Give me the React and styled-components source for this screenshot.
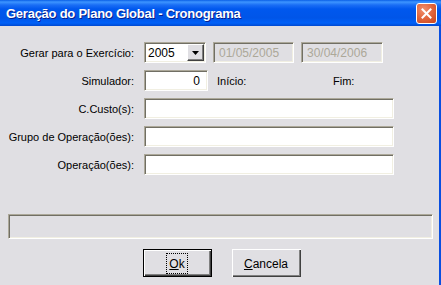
import styled, { createGlobalStyle } from 'styled-components';

const GlobalStyle = createGlobalStyle`
  html, body {
    margin: 0;
    padding: 0;
    background: #e0dfe3;
  }
  body {
    font-family: "Liberation Sans", Arial, sans-serif;
    font-size: 11px;
    color: #000;
  }
`;

const Window = styled.div`
  width: 441px;
  height: 285px;
  display: flex;
  flex-direction: column;
  overflow: hidden;
`;

const TitleBar = styled.div`
  height: 26px;
  flex: 0 0 26px;
  display: flex;
  align-items: center;
  justify-content: space-between;
  padding: 0 4px 0 6px;
  box-sizing: border-box;
  background: linear-gradient(
    to bottom,
    #0a5fe6 0px,
    #3d95ff 2px,
    #1a6ef5 5px,
    #0058ee 9px,
    #0055e8 18px,
    #0061f8 23px,
    #0049d0 26px
  );
`;

const Title = styled.span`
  font-family: "Liberation Sans", Arial, sans-serif;
  font-weight: bold;
  font-size: 13px;
  color: #fff;
  text-shadow: 1px 1px #0a1e8c;
  letter-spacing: -0.25px;
  margin-top: 1px;
`;

const CloseButton = styled.div`
  width: 21px;
  height: 21px;
  box-sizing: border-box;
  border: 1px solid #fff;
  border-radius: 3px;
  background: radial-gradient(circle at 35% 30%, #f0906f 0%, #e3683f 45%, #c9441c 100%);
  display: grid;
  place-items: center;
`;

const Client = styled.div`
  flex: 1;
  display: flex;
  flex-direction: column;
  background: #e0dfe3;
  border-right: 2px solid #0a4fe0;
`;

const Form = styled.div`
  display: flex;
  flex-direction: column;
  gap: 7px;
  padding-top: 16px;
`;

const Row = styled.div`
  display: flex;
  align-items: center;
  height: 21px;
`;

const Label = styled.span`
  width: 134px;
  margin-right: 10px;
  text-align: right;
  white-space: nowrap;
`;

const Sunken = styled.div`
  box-sizing: border-box;
  height: 21px;
  width: ${(p) => p.$w}px;
  margin-right: ${(p) => p.$mr || 0}px;
  border-top: 1px solid #aca899;
  border-left: 1px solid #aca899;
  border-bottom: 1px solid #fff;
  border-right: 1px solid #fff;
  box-shadow: inset 1px 1px #716f64, inset -1px -1px #f1efe2;
  background: ${(p) => (p.$disabled ? '#e0dfe3' : '#fff')};
  color: ${(p) => (p.$disabled ? '#aca899' : '#000')};
  display: flex;
  align-items: center;
  justify-content: ${(p) => (p.$right ? 'flex-end' : 'flex-start')};
  padding: 0 ${(p) => (p.$right ? 7 : 4)}px 0 ${(p) => (p.$disabled ? 5 : 3)}px;
  font-size: ${(p) => (p.$disabled ? 12 : 11)}px;
  white-space: nowrap;
`;

const ComboText = styled.span`
  flex: ${(p) => (p.$fill ? 1 : 'none')};
  font-size: 12px;
`;

const DropButton = styled.div`
  width: 17px;
  height: 17px;
  margin-right: -3px;
  box-sizing: border-box;
  background: #e0dfe3;
  border-top: 1px solid #fff;
  border-left: 1px solid #fff;
  border-right: 1px solid #404040;
  border-bottom: 1px solid #404040;
  box-shadow: inset -1px -1px #808080;
  display: grid;
  place-items: center;
`;

const Caption = styled.span`
  width: ${(p) => p.$w}px;
  white-space: nowrap;
`;

const StatusPanel = styled.div`
  box-sizing: border-box;
  margin: 39px 6px 0 8px;
  height: 25px;
  border-top: 1px solid #aca899;
  border-left: 1px solid #aca899;
  border-bottom: 1px solid #fff;
  border-right: 1px solid #fff;
  box-shadow: inset 1px 1px #716f64, inset -1px -1px #f1efe2;
`;

const ButtonBar = styled.div`
  display: flex;
  justify-content: center;
  gap: 20px;
  margin-top: 10px;
  padding-left: 4px;
`;

const Button = styled.div`
  box-sizing: border-box;
  width: ${(p) => p.$w}px;
  height: 28px;
  background: #e0dfe3;
  border: ${(p) => (p.$default ? '1px solid #000' : 'none')};
  box-shadow: inset 1px 1px #fff, inset -1px -1px #404040, inset -2px -2px #808080;
  display: flex;
  align-items: center;
  justify-content: center;
  font-size: 12px;
  padding-top: 1px;
`;

const Focus = styled.span`
  outline: 1px dotted #000;
  outline-offset: 1px;
  padding: 2px 1px 1px;
`;

const Mnemonic = styled.span`
  text-decoration: underline;
`;

const Arrow = () => (
  <svg width="7" height="4" viewBox="0 0 7 4">
    <path d="M0 0h7L3.5 4z" fill="#000" />
  </svg>
);

const CloseX = () => (
  <svg width="11" height="11" viewBox="0 0 11 11">
    <path d="M1.5 1.5l8 8M9.5 1.5l-8 8" stroke="#fff" strokeWidth="2" strokeLinecap="square" />
  </svg>
);

export default function App() {
  return (
    <Window>
      <GlobalStyle />
      <TitleBar>
        <Title>Geração do Plano Global - Cronograma</Title>
        <CloseButton>
          <CloseX />
        </CloseButton>
      </TitleBar>
      <Client>
        <Form>
          <Row>
            <Label>Gerar para o Exercício:</Label>
            <Sunken $w={62} $mr={7}>
              <ComboText $fill>2005</ComboText>
              <DropButton>
                <Arrow />
              </DropButton>
            </Sunken>
            <Sunken $w={81} $mr={7} $disabled>
              01/05/2005
            </Sunken>
            <Sunken $w={82} $disabled>
              30/04/2006
            </Sunken>
          </Row>
          <Row>
            <Label>Simulador:</Label>
            <Sunken $w={64} $mr={9} $right>
              <ComboText>0</ComboText>
            </Sunken>
            <Caption $w={116}>Início:</Caption>
            <Caption $w={40}>Fim:</Caption>
          </Row>
          <Row>
            <Label>C.Custo(s):</Label>
            <Sunken $w={250} />
          </Row>
          <Row>
            <Label>Grupo de Operação(ões):</Label>
            <Sunken $w={250} />
          </Row>
          <Row>
            <Label>Operação(ões):</Label>
            <Sunken $w={250} />
          </Row>
        </Form>
        <StatusPanel />
        <ButtonBar>
          <Button $w={69} $default>
            <Focus>
              <Mnemonic>O</Mnemonic>k
            </Focus>
          </Button>
          <Button $w={69}>
            <span>
              <Mnemonic>C</Mnemonic>ancela
            </span>
          </Button>
        </ButtonBar>
      </Client>
    </Window>
  );
}
